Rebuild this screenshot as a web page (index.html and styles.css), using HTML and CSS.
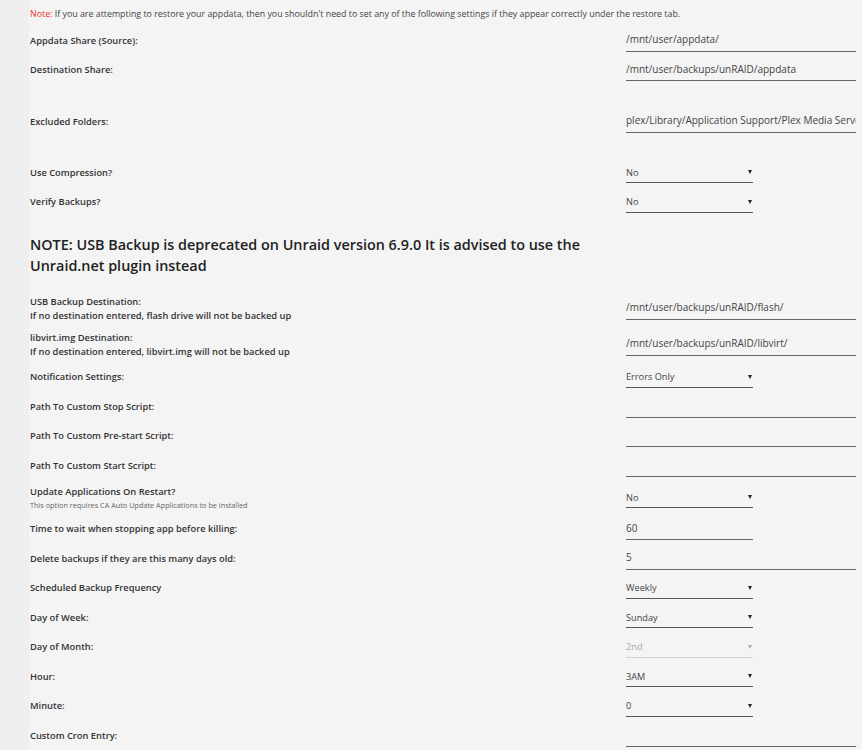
FILE: index.html
```html
<!DOCTYPE html>
<html lang="en">
<head>
    <meta charset="UTF-8">
    <meta name="viewport" content="width=device-width, initial-scale=1.0">
    <title>Backup / Restore Appdata - Settings</title>
    <link rel="stylesheet" href="styles.css">
</head>
<body>
    <div class="panel">
        <p class="note"><span class="note-tag">Note:</span> If you are attempting to restore your appdata, then you shouldn't need to set any of the following settings if they appear correctly under the restore tab.</p>

        <div class="row">
            <div class="label">Appdata Share (Source):</div>
            <div class="field">/mnt/user/appdata/</div>
        </div>
        <div class="row">
            <div class="label">Destination Share:</div>
            <div class="field">/mnt/user/backups/unRAID/appdata</div>
        </div>
        <div class="row row-spaced">
            <div class="label">Excluded Folders:</div>
            <div class="field">plex/Library/Application Support/Plex Media Server/Cache</div>
        </div>
        <div class="row">
            <div class="label">Use Compression?</div>
            <div class="select">No</div>
        </div>
        <div class="row">
            <div class="label">Verify Backups?</div>
            <div class="select">No</div>
        </div>

        <h2 class="notice">NOTE: USB Backup is deprecated on Unraid version 6.9.0 It is advised to use the Unraid.net plugin instead</h2>

        <div class="row row-tall">
            <div class="label">USB Backup Destination:<br>If no destination entered, flash drive will not be backed up</div>
            <div class="field">/mnt/user/backups/unRAID/flash/</div>
        </div>
        <div class="row row-tall">
            <div class="label">libvirt.img Destination:<br>If no destination entered, libvirt.img will not be backed up</div>
            <div class="field">/mnt/user/backups/unRAID/libvirt/</div>
        </div>
        <div class="row">
            <div class="label">Notification Settings:</div>
            <div class="select">Errors Only</div>
        </div>
        <div class="row">
            <div class="label">Path To Custom Stop Script:</div>
            <div class="field"></div>
        </div>
        <div class="row">
            <div class="label">Path To Custom Pre-start Script:</div>
            <div class="field"></div>
        </div>
        <div class="row">
            <div class="label">Path To Custom Start Script:</div>
            <div class="field"></div>
        </div>
        <div class="row row-tall">
            <div class="label">Update Applications On Restart?<small>This option requires CA Auto Update Applications to be installed</small></div>
            <div class="select">No</div>
        </div>
        <div class="row">
            <div class="label">Time to wait when stopping app before killing:</div>
            <div class="field short">60</div>
        </div>
        <div class="row">
            <div class="label">Delete backups if they are this many days old:</div>
            <div class="field">5</div>
        </div>
        <div class="row">
            <div class="label">Scheduled Backup Frequency</div>
            <div class="select">Weekly</div>
        </div>
        <div class="row">
            <div class="label">Day of Week:</div>
            <div class="select">Sunday</div>
        </div>
        <div class="row">
            <div class="label">Day of Month:</div>
            <div class="select disabled">2nd</div>
        </div>
        <div class="row">
            <div class="label">Hour:</div>
            <div class="select">3AM</div>
        </div>
        <div class="row">
            <div class="label">Minute:</div>
            <div class="select">0</div>
        </div>
        <div class="row">
            <div class="label">Custom Cron Entry:</div>
            <div class="field"></div>
        </div>
    </div>
</body>
</html>
```

FILE: styles.css
```css
:root {
    --page-bg: #efefef;
    --panel-bg: #f4f4f4;
    --label-color: #333;
    --value-color: #444;
    --line-color: #666;
}

body {
    margin: 0;
    background-color: var(--page-bg);
    font-family: "Open Sans", "Noto Sans", sans-serif;
    color: var(--label-color);
}

.panel {
    margin-left: 29px;
    padding-left: 1px;
    min-height: 100vh;
    background-color: var(--panel-bg);
    overflow: hidden;
}

.note {
    margin: 0;
    padding: 6px 0 4px;
    font-size: 8.85px;
    line-height: 16px;
    color: #444;
}

.note-tag {
    color: #f0302a;
}

.row {
    display: grid;
    grid-template-columns: 596px 1fr;
    align-items: center;
    min-height: 29.5px;
    box-sizing: border-box;
}

.row-spaced {
    margin: 22px 0 21.5px;
}

.row-tall {
    padding: 4px 0;
}

.label {
    font-size: 9.3px;
    font-weight: 600;
    line-height: 14px;
}

.label small {
    display: block;
    font-size: 7.3px;
    font-weight: 400;
    line-height: 12px;
    color: #666;
}

.field {
    width: 230px;
    height: 23px;
    margin-bottom: 2px;
    border-bottom: 1px solid var(--line-color);
    display: flex;
    align-items: center;
    font-size: 10px;
    color: var(--value-color);
    white-space: nowrap;
    overflow: hidden;
}

.field.short {
    width: 127px;
}

.select {
    width: 127px;
    height: 20px;
    border-bottom: 1px solid #555;
    display: flex;
    align-items: center;
    justify-content: space-between;
    font-size: 9.2px;
    color: var(--value-color);
}

/* dropdown caret */
.select::after {
    content: "";
    margin-right: 1px;
    border-left: 2.5px solid transparent;
    border-right: 2.5px solid transparent;
    border-top: 4px solid #222;
}

.select.disabled {
    color: #aaa;
    border-bottom-color: #d4d4d4;
}

.select.disabled::after {
    border-top-color: #aaa;
}

.notice {
    margin: 17px 0 14.5px;
    max-width: 570px;
    font-size: 14.4px;
    font-weight: 600;
    line-height: 21px;
    color: #222;
}
```
